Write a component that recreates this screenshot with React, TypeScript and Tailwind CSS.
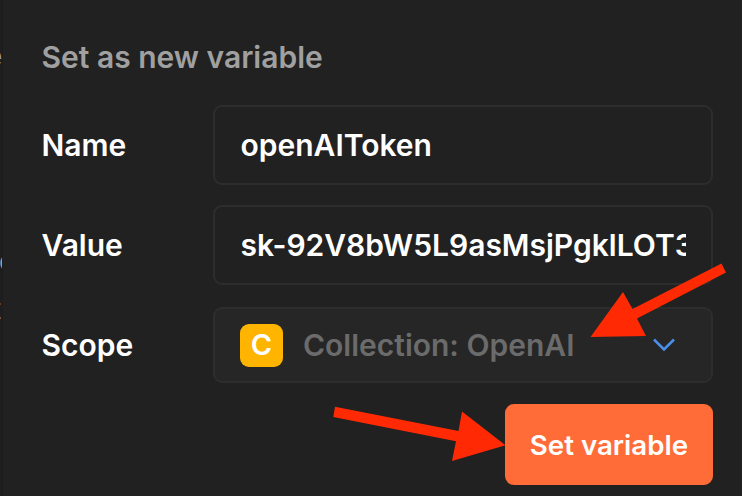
function Field({ label, value }: { label: string; value: string }) {
  return (
    <div className="flex h-20 items-center">
      <label className="w-[171.5px] leading-10">{label}</label>
      <div className="flex h-20 w-[500px] items-center rounded-[9px] border-2 border-[#2d2d2d] px-[25.5px]">
        <span className="w-full overflow-hidden whitespace-nowrap leading-10">{value}</span>
      </div>
    </div>
  );
}

function Arrows() {
  return (
    <svg className="pointer-events-none absolute inset-0" width="742" height="496" viewBox="0 0 742 496" fill="#ff2a04">
      <path d="M721.5 263.5 L726 272.5 L637 318.5 L646 336 L590.5 337 L623 292 L632.5 309 Z" />
      <path d="M335 406.7 L458.5 431 L462 411.5 L505.5 445.3 L452 461 L456 441.2 L333.3 417 Z" />
    </svg>
  );
}

export default function App() {
  return (
    <div className="relative flex h-[496px] w-[742px] overflow-hidden bg-[#212121] font-['Inter',sans-serif] text-[30px] font-semibold text-white [font-optical-sizing:none]">
      <aside className="relative w-[3px] shrink-0 overflow-hidden border-r border-[#1c1c1c] bg-[#1e1e1e] text-[28px] font-normal text-[#a0a0a0]">
        <span className="absolute -left-[14px] top-[38px] leading-9">e</span>
        <span className="absolute -left-px top-[243px] leading-9">c</span>
        <span className="absolute -left-[8px] top-[291px] leading-9">t</span>
      </aside>
      <main className="flex flex-col pl-[38.5px] pt-[36.5px]">
        <h1 className="h-[68px] leading-10 text-[#a0a0a0]">Set as new variable</h1>
        <div className="flex flex-col gap-5">
          <Field label="Name" value="openAIToken" />
          <Field label="Value" value="sk-92V8bW5L9asMsjPgklLOT3BlbkFJ" />
        </div>
        <div className="mt-[22.5px] flex h-[76px] items-center">
          <label className="w-[171.5px] leading-10">Scope</label>
          <div className="flex h-[76px] w-[500px] items-center rounded-[9px] border-2 border-[#2d2d2d] bg-[#262626] pl-[25px] pr-9">
            <span className="flex size-[43px] items-center justify-center rounded-[9px] bg-[#ffb400] text-[29px]">C</span>
            <span className="ml-[20px] flex-1 whitespace-nowrap pb-px leading-10 text-[#6b6b6b]">Collection: OpenAI</span>
            <svg className="shrink-0" width="22" height="14" viewBox="0 0 22 14" fill="none" stroke="#4a90e8" strokeWidth="2.5">
              <path d="M1 1.5 L11 11.5 L21 1.5" />
            </svg>
          </div>
        </div>
        <button className="mt-[21px] flex h-[81px] w-[208px] items-center justify-center self-end rounded-[9px] bg-[#ff6c37] pt-0.5 text-[27.7px]">
          Set variable
        </button>
      </main>
      <Arrows />
    </div>
  );
}
